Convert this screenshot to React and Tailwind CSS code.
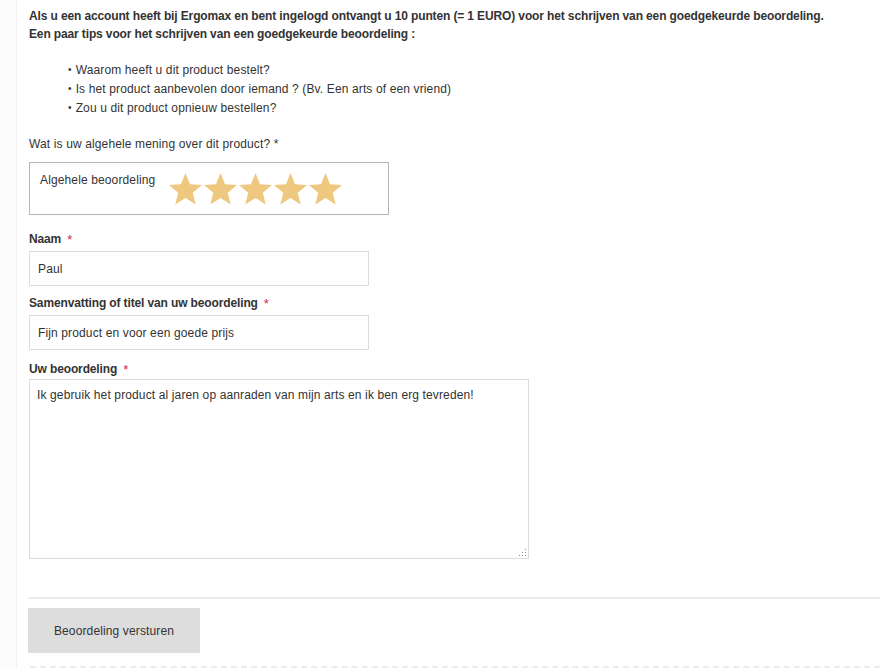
import React from "react";

function Star() {
  return (
    <svg width="35" height="34" viewBox="0 0 24 23" className="block">
      <path
        d="M12 0.6l3.1 7.6 8.2 0.6-6.3 5.3 2 8-7-4.4-7 4.4 2-8L0.7 8.8l8.2-0.6z"
        fill="#eec87f"
      />
    </svg>
  );
}

function Req() {
  return <span className="ml-[6px] text-[#e2223f] font-normal text-[13px] relative top-[1px]">*</span>;
}

function Dot() {
  return <span className="block w-[1px] h-[1px] bg-[#8a8a8a]" />;
}

export default function App() {
  return (
    <div
      className="flex min-h-[669px] w-[880px] bg-white text-[12px] text-[#333] tracking-[0.13px]"
      style={{ fontFamily: '"Liberation Sans", Arial, sans-serif' }}
    >
      <div className="w-[17px] shrink-0 bg-[#fcfcfc] border-r border-[#f1f1f1]" />
      <div className="flex-1 pl-[11px] overflow-hidden">
        <div className="pl-[1px]">
          <p className="pt-[7px] leading-[18px] font-bold tracking-[-0.13px] whitespace-nowrap">
            Als u een account heeft bij Ergomax en bent ingelogd ontvangt u 10 punten (= 1 EURO) voor het schrijven van een goedgekeurde beoordeling.
            <br />
            Een paar tips voor het schrijven van een goedgekeurde beoordeling :
          </p>
          <ul className="mt-[18px] ml-[39px] leading-[19px]">
            {[
              "Waarom heeft u dit product bestelt?",
              "Is het product aanbevolen door iemand ? (Bv. Een arts of een vriend)",
              "Zou u dit product opnieuw bestellen?",
            ].map((t) => (
              <li key={t} className="flex gap-[4px]">
                <span className="relative top-[-1px] text-[10px]">•</span>
                <span>{t}</span>
              </li>
            ))}
          </ul>
          <p className="mt-[17px] leading-[18px]">Wat is uw algehele mening over dit product? *</p>
        </div>

        <div className="mt-[9px] ml-[1px] w-[360px] h-[53px] border border-[#b5b5b5] flex items-start">
          <div className="pt-[8px] pl-[10px] w-[138px] leading-[18px] whitespace-nowrap">
            Algehele beoordeling
          </div>
          <div className="mt-[9px] flex">
            <Star />
            <Star />
            <Star />
            <Star />
            <Star />
          </div>
        </div>

        <div className="ml-[1px]">
          <label className="block mt-[15px] leading-[18px] font-bold tracking-[-0.13px]">
            Naam<Req />
          </label>
          <div className="mt-[3px] w-[340px] h-[35px] border border-[#dcdcdc] flex items-center pl-[8px] leading-[18px]">
            Paul
          </div>

          <label className="block mt-[8px] leading-[18px] font-bold tracking-[-0.13px]">
            Samenvatting of titel van uw beoordeling<Req />
          </label>
          <div className="mt-[3px] w-[340px] h-[35px] border border-[#dcdcdc] flex items-center pl-[8px] leading-[18px]">
            Fijn product en voor een goede prijs
          </div>

          <label className="block mt-[10px] leading-[18px] font-bold tracking-[-0.13px]">
            Uw beoordeling<Req />
          </label>
          <div className="relative mt-[1px] w-[500px] h-[180px]">
            <textarea
              readOnly
              defaultValue="Ik gebruik het product al jaren op aanraden van mijn arts en ik ben erg tevreden!"
              className="block w-full h-full border border-[#dcdcdc] pt-[6px] pl-[7px] leading-[18px] text-[12px] text-[#333] tracking-[0.13px] outline-none resize-none"
              style={{ fontFamily: '"Liberation Sans", Arial, sans-serif' }}
            />
            <div className="absolute right-[3px] bottom-[3px] flex flex-col items-end gap-[2px]">
              <div className="flex gap-[2px]"><Dot /></div>
              <div className="flex gap-[2px]"><Dot /><Dot /></div>
              <div className="flex gap-[2px]"><Dot /><Dot /><Dot /></div>
            </div>
          </div>
        </div>

        <div className="mt-[38px] border-t-2 border-[#ececec]" />
        <button className="mt-[9px] w-[172px] h-[45px] bg-[#dddddd] text-[12px] text-[#333] tracking-[0.13px]">
          Beoordeling versturen
        </button>
        <div className="mt-[13px] ml-[2px] border-t-2 border-dashed border-[#ececec]" />
      </div>
    </div>
  );
}
